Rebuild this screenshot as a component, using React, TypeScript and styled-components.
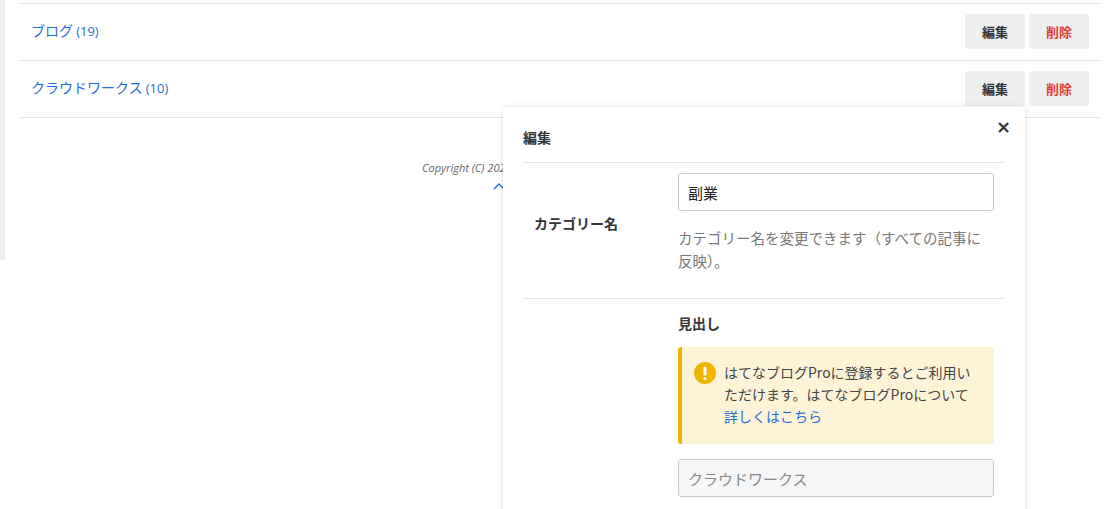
import React from 'react';
import styled, { createGlobalStyle } from 'styled-components';

const Global = createGlobalStyle`
  body {
    margin: 0;
    background: #fff;
    font-family: "Noto Sans CJK JP", "Open Sans", sans-serif;
    color: #333;
  }
`;

const Page = styled.div`
  position: relative;
  width: 1109px;
  height: 509px;
  overflow: hidden;
  display: flex;
`;

const SideStrip = styled.div`
  width: 5px;
  height: 260px;
  background: #eceef1;
  flex: none;
`;

const Main = styled.div`
  flex: 1;
  padding: 3px 9px 0 15px;
`;

const List = styled.div`
  border-top: 1px solid #e1e4e7;
`;

const Row = styled.div`
  display: flex;
  align-items: center;
  justify-content: space-between;
  height: 56px;
  padding: 0 11px;
  border-bottom: 1px solid #e1e4e7;
`;

const CatLink = styled.a`
  color: #1f6dd6;
  font-size: 14px;
  text-decoration: none;
  margin-top: -4px;
  span { font-family: "Open Sans", sans-serif; font-size: 13px; }
`;

const Buttons = styled.div`
  display: flex;
  gap: 4px;
  margin-top: -2px;
`;

const Btn = styled.button<{ $danger?: boolean }>`
  width: 60px;
  height: 35px;
  border: none;
  border-radius: 3px;
  background: #eeeff1;
  color: ${p => (p.$danger ? '#e03c31' : '#333')};
  font-family: inherit;
  font-weight: bold;
  font-size: 13px;
`;

const Footer = styled.div`
  display: flex;
  flex-direction: column;
  align-items: flex-start;
  padding-top: 42px;
  padding-left: 402px;
`;

const Copy = styled.div`
  font-family: "Open Sans", sans-serif;
  font-style: italic;
  font-size: 11px;
  color: #666;
  white-space: nowrap;
`;

const UpArrow = styled.svg`
  margin: 6px 0 0 70px;
`;

const Modal = styled.div`
  position: absolute;
  left: 503px;
  top: 107px;
  width: 522px;
  height: 420px;
  background: #fff;
  box-shadow: 0 0 6px rgba(0, 0, 0, 0.12);
  padding: 0 21px 0 20px;
  box-sizing: border-box;
`;

const ModalHead = styled.div`
  display: flex;
  justify-content: space-between;
  align-items: flex-start;
  border-bottom: 1px solid #e1e4e7;
  height: 56px;
  box-sizing: border-box;
  padding-top: 20px;
`;

const Title = styled.div`
  font-weight: bold;
  font-size: 14px;
`;

const Close = styled.div`
  font-size: 18px;
  font-weight: bold;
  line-height: 1;
  margin-right: -7px;
  margin-top: -9px;
  font-family: "DejaVu Sans", sans-serif;
`;

const FieldRow = styled.div<{ $border?: boolean }>`
  display: grid;
  grid-template-columns: 155px 316px;
  align-items: center;
  padding: ${p => (p.$border ? '10px 0 26px' : '12px 0 20px')};
  ${p => (p.$border ? 'border-bottom: 1px solid #e1e4e7;' : '')}
`;

const Label = styled.div`
  font-weight: bold;
  font-size: 14px;
  padding-left: 11px;
`;

const Input = styled.div<{ $disabled?: boolean }>`
  height: 38px;
  box-sizing: border-box;
  border: 1px solid #c3c9cf;
  border-radius: 3px;
  padding: 0 9px;
  display: flex;
  align-items: center;
  font-size: 15px;
  color: ${p => (p.$disabled ? '#888' : '#222')};
  background: ${p => (p.$disabled ? '#f5f6f8' : '#fff')};
`;

const Help = styled.div`
  font-size: 14.5px;
  color: #777;
  line-height: 23px;
  margin-top: 15px;
`;

const Heading = styled.div`
  font-weight: bold;
  font-size: 14px;
  margin: 2px 0 14px;
`;

const Alert = styled.div`
  display: flex;
  gap: 8px;
  background: #fdf4d8;
  border-left: 4px solid #f0b400;
  border-radius: 3px;
  padding: 14px 12px 17px 12px;
  font-size: 14px;
  line-height: 22px;
  color: #444;
  margin-bottom: 15px;
  a { color: #1f6dd6; text-decoration: none; }
`;

const Icon = styled.div`
  width: 22px;
  height: 22px;
  flex: none;
  margin-top: 1px;
`;

export default function App() {
  return (
    <Page>
      <Global />
      <SideStrip />
      <Main>
        <List>
          <Row>
            <CatLink href="#">ブログ <span>(19)</span></CatLink>
            <Buttons><Btn>編集</Btn><Btn $danger>削除</Btn></Buttons>
          </Row>
          <Row>
            <CatLink href="#">クラウドワークス <span>(10)</span></CatLink>
            <Buttons><Btn>編集</Btn><Btn $danger>削除</Btn></Buttons>
          </Row>
        </List>
        <Footer>
          <Copy>Copyright (C) 2020</Copy>
          <UpArrow width="14" height="10" viewBox="0 0 14 10">
            <path d="M2 8 L7 3 L12 8" stroke="#1f6dd6" strokeWidth="1.3" fill="none" />
          </UpArrow>
        </Footer>
      </Main>
      <Modal>
        <ModalHead>
          <Title>編集</Title>
          <Close>×</Close>
        </ModalHead>
        <FieldRow $border>
          <Label>カテゴリー名</Label>
          <div>
            <Input>副業</Input>
            <Help>カテゴリー名を変更できます（すべての記事に反映）。</Help>
          </div>
        </FieldRow>
        <FieldRow>
          <div />
          <div>
            <Heading>見出し</Heading>
            <Alert>
              <Icon>
                <svg viewBox="0 0 22 22" width="22" height="22">
                  <circle cx="11" cy="11" r="11" fill="#f0b400" />
                  <rect x="9.5" y="4.5" width="3" height="9" rx="1.2" fill="#fff" />
                  <circle cx="11" cy="16.5" r="1.6" fill="#fff" />
                </svg>
              </Icon>
              <div>
                はてなブログProに登録するとご利用いただけます。はてなブログProについて<br />
                <a href="#">詳しくはこちら</a>
              </div>
            </Alert>
            <Input $disabled>クラウドワークス</Input>
          </div>
        </FieldRow>
      </Modal>
    </Page>
  );
}
